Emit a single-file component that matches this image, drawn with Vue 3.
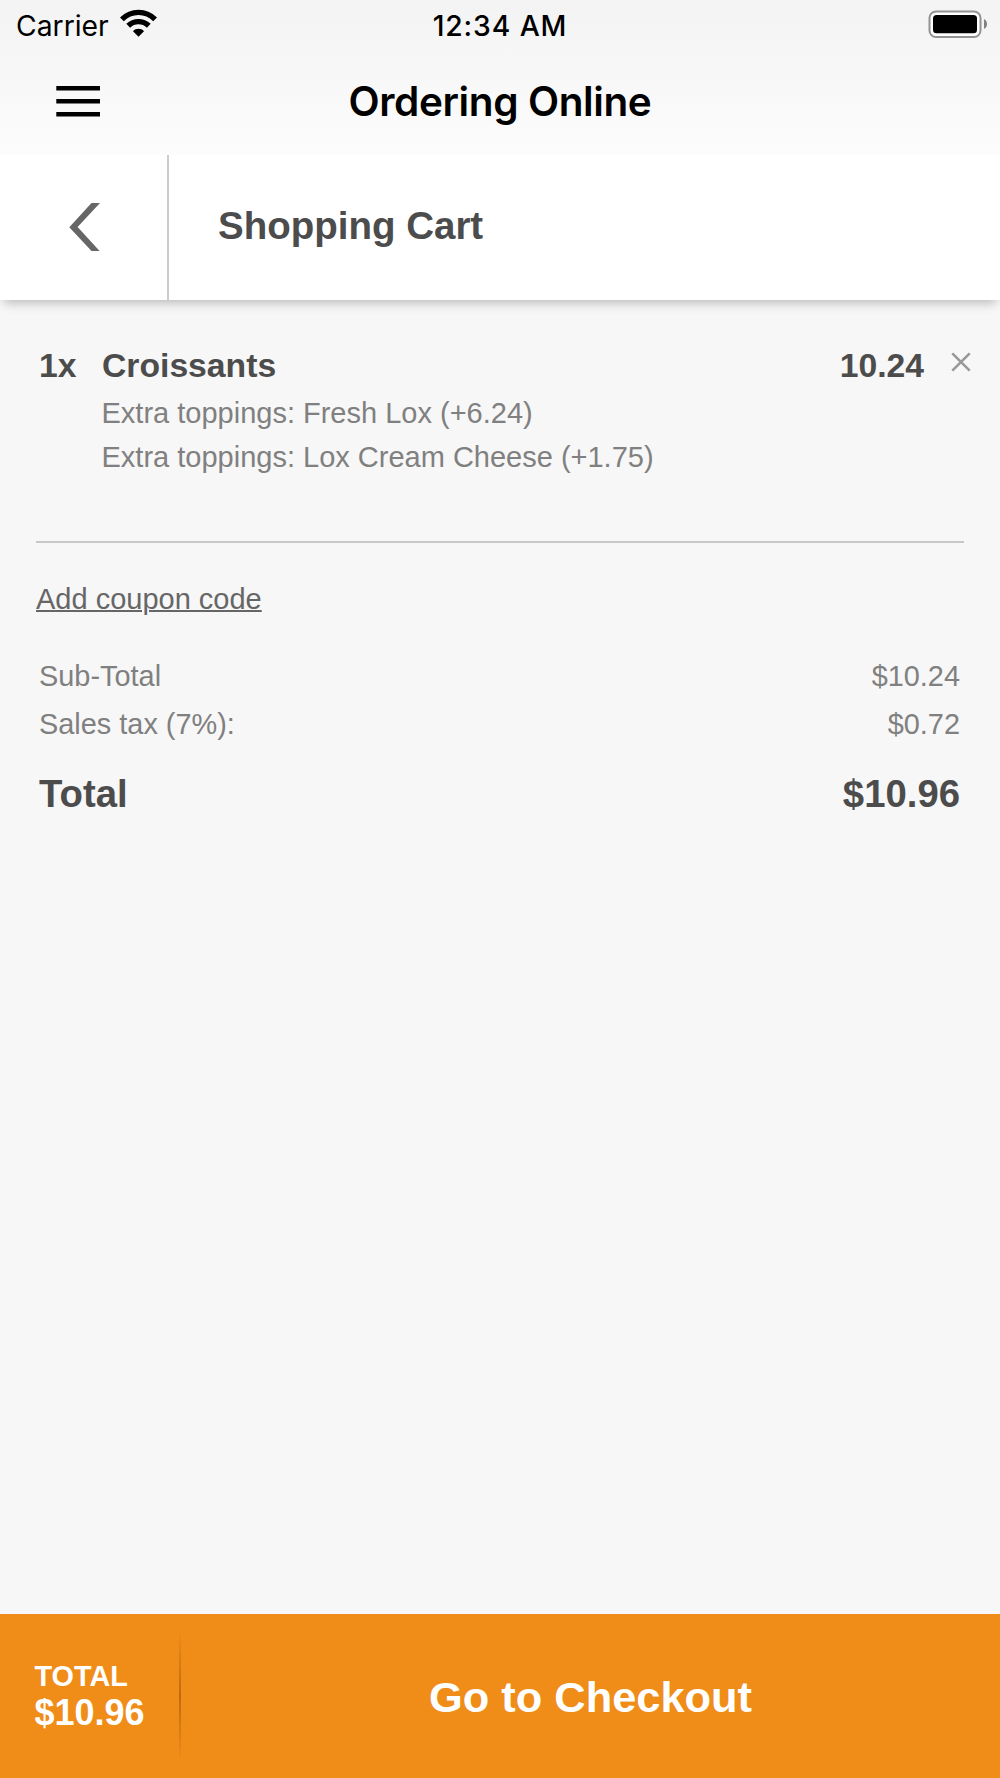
<script setup>
const item = {
  quantity: '1x',
  name: 'Croissants',
  price: '10.24',
  options: [
    'Extra toppings: Fresh Lox (+6.24)',
    'Extra toppings: Lox Cream Cheese (+1.75)',
  ],
}
const charges = [
  { label: 'Sub-Total', value: '$10.24' },
  { label: 'Sales tax (7%):', value: '$0.72' },
]
const total = '$10.96'
</script>

<template>
  <div class="screen">
    <header class="top-bar">
      <div class="status">
        <div class="carrier">
          <span class="carrier-name">Carrier</span>
          <svg class="wifi" width="37" height="28" viewBox="0 0 37 28">
            <path d="M1.9 10.3C11.2 1 25.8 1 35.1 10.3" fill="none" stroke="#000" stroke-width="5.4" />
            <path d="M8.2 16.8C14 11.2 23 11.2 28.8 16.8" fill="none" stroke="#000" stroke-width="5.4" />
            <path d="M13 22.2C16 19 21 19 24 22.2L18.5 27.8Z" />
          </svg>
        </div>
        <span class="clock">12:34 AM</span>
        <svg class="battery" width="60" height="28" viewBox="0 0 60 28">
          <rect x="1.5" y="1.5" width="51" height="25.5" rx="6.5" fill="#fff" stroke="#929292" stroke-width="2" />
          <rect x="5" y="5" width="44" height="18.3" rx="3.5" />
          <path d="M56 9C60 11 60 17 56 19Z" fill="#808080" />
        </svg>
      </div>
      <div class="nav">
        <svg class="menu" width="44" height="31" viewBox="0 0 44 31">
          <path d="M0.3 2.3H44M0.3 15.3H44M0.3 28.3H44" stroke="#000" stroke-width="4.4" />
        </svg>
        <h1 class="app-title">Ordering Online</h1>
      </div>
    </header>

    <div class="page-head">
      <div class="back">
        <svg width="31" height="48" viewBox="0 0 31 48">
          <path d="M22.5 0H31L8.6 24L30.6 48H22.5L0.3 24.3Z" fill="#666" />
        </svg>
      </div>
      <h2 class="page-title">Shopping Cart</h2>
    </div>

    <main class="cart">
      <section class="item">
        <div class="item-row">
          <span class="qty">{{ item.quantity }}</span>
          <span class="name">{{ item.name }}</span>
          <span class="price">{{ item.price }}</span>
          <svg class="remove" width="20" height="20" viewBox="0 0 20 20">
            <path d="M1.3 1.3L18.7 18.7M18.7 1.3L1.3 18.7" stroke="#999" stroke-width="2.6" />
          </svg>
        </div>
        <p v-for="option in item.options" :key="option" class="option">{{ option }}</p>
      </section>

      <a class="coupon">Add coupon code</a>

      <section class="charges">
        <div v-for="charge in charges" :key="charge.label" class="charge">
          <span>{{ charge.label }}</span>
          <span>{{ charge.value }}</span>
        </div>
        <div class="charge grand">
          <span>Total</span>
          <span>{{ total }}</span>
        </div>
      </section>
    </main>

    <footer class="checkout">
      <div class="summary">
        <span class="summary-label">TOTAL</span>
        <span class="summary-value">{{ total }}</span>
      </div>
      <div class="rule"></div>
      <div class="go"><span>Go to Checkout</span></div>
    </footer>
  </div>
</template>

<style>
body {
  margin: 0;
}
</style>

<style scoped>
.screen {
  display: flex;
  flex-direction: column;
  width: 1000px;
  height: 1778px;
  overflow: hidden;
  background: #f7f7f7;
  color: #4c4c4c;
  font-family: "Liberation Sans", Arial, sans-serif;
}

h1,
h2,
p {
  margin: 0;
}

svg {
  display: block;
  flex: none;
}

.top-bar {
  flex: none;
  height: 155px;
  background: linear-gradient(#f3f3f3, #fcfcfc);
  color: #000;
  font-family: Inter, sans-serif;
}

.status {
  display: grid;
  grid-template-columns: 1fr auto 1fr;
  height: 51px;
  padding: 0 12px;
  line-height: 53px;
}

.carrier {
  display: flex;
  padding-left: 4px;
}

.carrier-name {
  width: 104px;
  font-size: 28.3px;
}

.wifi {
  margin-top: 9px;
}

.clock {
  font-size: 28.3px;
  font-weight: 500;
  letter-spacing: 0.9px;
}

.battery {
  justify-self: end;
  margin-top: 10px;
}

.nav {
  display: grid;
  grid-template-columns: 1fr auto 1fr;
  align-items: center;
  height: 101px;
  padding: 0 56px;
}

.app-title {
  font-size: 40.5px;
  font-weight: 600;
  letter-spacing: -0.4px;
  line-height: 101px;
}

.page-head {
  display: flex;
  flex: none;
  height: 145px;
  background: #fff;
  box-shadow: 0 7px 10px -4px rgba(0, 0, 0, 0.25);
}

.back {
  display: flex;
  align-items: center;
  box-sizing: border-box;
  width: 169px;
  padding: 0 0 2px 69px;
  border-right: 2px solid #ccc;
}

.page-title {
  padding-left: 49px;
  font-size: 38.5px;
  line-height: 142px;
}

.cart {
  flex: 1;
  padding: 45px 36px 0;
}

.item {
  height: 196px;
  border-bottom: 2px solid #c8c8c8;
}

.item-row {
  display: flex;
  margin-bottom: 7px;
  font-size: 33.7px;
  font-weight: 700;
  line-height: 40px;
}

.qty {
  width: 63px;
  padding-left: 3px;
}

.name {
  flex: 1;
}

.price {
  margin-right: 27px;
}

.remove {
  margin: 7px -7px 0 0;
}

.option {
  padding-left: 65.5px;
  color: #808080;
  font-size: 29px;
  line-height: 43.6px;
}

.coupon {
  display: block;
  width: max-content;
  margin-top: 36px;
  color: #666;
  font-size: 29px;
  line-height: 40px;
  text-decoration: underline;
  text-decoration-thickness: 2px;
}

.charges {
  padding: 33px 4px 0 3px;
}

.charge {
  display: flex;
  justify-content: space-between;
  color: #808080;
  font-size: 28.9px;
  line-height: 48px;
}

.grand {
  margin-top: 16px;
  color: #4c4c4c;
  font-size: 38.3px;
  font-weight: 700;
  line-height: 60px;
}

.checkout {
  display: flex;
  flex: none;
  align-items: center;
  height: 164px;
  background: #f08c18;
  color: #fff;
  font-weight: 700;
}

.summary {
  display: flex;
  flex-direction: column;
  width: 144.5px;
  padding: 0 0 4px 34.5px;
}

.summary-label {
  font-size: 28.8px;
  line-height: 36px;
}

.summary-value {
  font-size: 36px;
  line-height: 37px;
}

.rule {
  width: 2px;
  height: 130px;
  background: linear-gradient(rgba(110, 60, 0, 0), rgba(110, 60, 0, 0.4), rgba(110, 60, 0, 0));
}

.go {
  flex: 1;
  padding-top: 2px;
  font-size: 43.4px;
  line-height: 60px;
  text-align: center;
}
</style>
